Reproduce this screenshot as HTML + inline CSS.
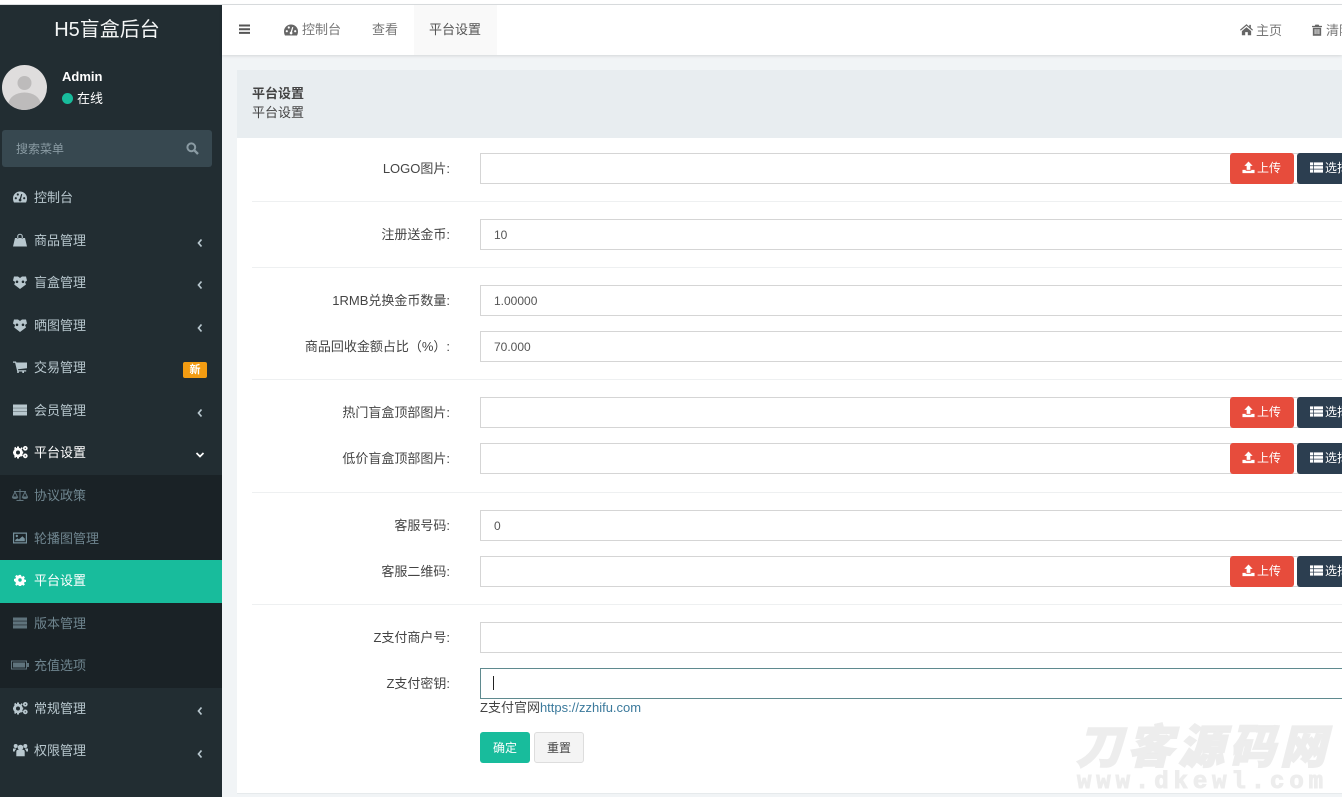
<!DOCTYPE html>
<html lang="zh-CN"><head><meta charset="utf-8"><title>平台设置</title>
<style>
*{box-sizing:border-box}
html,body{margin:0;padding:0;width:1342px;height:797px;overflow:hidden;background:#fff;font-family:"Liberation Sans","Noto Sans CJK SC",sans-serif;font-size:13px;color:#444}
.a{position:absolute;white-space:nowrap}
svg{position:absolute;display:block}
#top{position:absolute;left:0;top:4px;width:1342px;height:1px;background:#dcdfe1}
#side{position:absolute;left:0;top:5px;width:222px;height:792px;background:#222d32}
#main{position:absolute;left:222px;top:5px;width:1120px;height:792px;background:#f1f4f6}
#nav{position:absolute;left:222px;top:5px;width:1120px;height:50px;background:#fff;box-shadow:0 1px 3px rgba(0,0,0,.12)}
.m{position:absolute;left:34px;line-height:18px;font-size:13px;color:#b8c7ce;white-space:nowrap;transform:translateY(1px)}
.sub{color:#6f858f}
.lbl{position:absolute;right:892px;text-align:right;font-size:13px;line-height:18px;color:#444;white-space:nowrap;transform:translateY(1px)}
.in{position:absolute;left:480px;height:31px;background:#fff;border:1px solid #d5d5d5;padding-left:13px;line-height:31px;font-size:12px;color:#555;width:880px}
.hr{position:absolute;left:252px;width:1090px;height:1px;background:#eef0f1}
.up{position:absolute;left:1230px;width:64px;height:31px;background:#e74c3c;border-radius:3px;color:#fff;font-size:12px;line-height:30px;padding-left:27px}
.ch{position:absolute;left:1297px;width:70px;height:31px;background:#2c3e50;border-radius:3px;color:#fff;font-size:12px;line-height:30px;padding-left:28px}
</style></head><body>
<svg width="0" height="0" style="position:absolute">
<defs>
<symbol id="dash" viewBox="0 0 14 14"><path fill-rule="evenodd" d="M7 1.500a7 7 0 0 0-7 7c0 1.600.4 2.800 1 4h12c.6-1.200 1-2.400 1-4a7 7 0 0 0-7-7zM2.800 9.300a1.100 1.100 0 1 1 0-2.200 1.100 1.100 0 0 1 0 2.200zM4.800 5.600a1.100 1.100 0 1 1 0-2.200 1.100 1.100 0 0 1 0 2.200zM9.300 4.300 8 9a1.400 1.400 0 1 1-1.300-.3L8.200 4zM11.200 9.300a1.100 1.100 0 1 1 0-2.200 1.100 1.100 0 0 1 0 2.200z"/></symbol>
<symbol id="bag" viewBox="0 0 14 14"><path fill-rule="evenodd" d="M2 5h10l2 8.500H0zM4.200 5.500V3.500a2.800 2.800 0 0 1 5.600 0v2H8.700v-2a1.700 1.700 0 0 0-3.400 0v2z"/></symbol>
<symbol id="box" viewBox="0 0 14 14"><path fill-rule="evenodd" d="M1 1.500h4L7 3l2-1.500h4l1 4-2 1.500 1 2.500L7 14l-5.800-4.500L2.200 7 0 5.500zM4 5.500a1.300 1.300 0 1 0 0 2.600 1.300 1.300 0 0 0 0-2.600zM10 5.500a1.300 1.300 0 1 0 0 2.600 1.300 1.300 0 0 0 0-2.600z"/></symbol>
<symbol id="cart" viewBox="0 0 14 14"><path d="M0 1.500h3l.4 1H14v5.700l-9 1 .2 1h8v1.300h-2.200v1.500H9.300v-1.500H5.800v1.500H4.200v-1.700L2.100 2.800H0z"/></symbol>
<symbol id="list" viewBox="0 0 14 14"><path d="M0 1.500h14v11H0z"/><path d="M0 4.700h14v.7H0zM0 8.200h14v.7H0z" fill="#222d32" fill-opacity=".55"/></symbol>
<symbol id="listw" viewBox="0 0 14 14"><path d="M0 1.500h14v11H0z"/><path d="M0 4.700h14v.8H0zM0 8.300h14v.8H0zM3.500 1.500h.8v11h-.8z" fill="#2c3e50"/></symbol>
<symbol id="cogs" viewBox="0 0 15 14"><circle cx="5" cy="7.500" r="3.400" fill="none" stroke="currentColor" stroke-width="2.800"/><path d="M4 1.500h2v2H4zM4 11.500h2v2H4zM-.2 6.500h2v2h-2zM8.200 6.500h2v2h-2zM1 3l1.500-1.200 1 1.400-1.400 1.200zM7.500 10.200l1.300-1.100 1.200 1.400-1.400 1.100zM1 12l1.300 1 1.100-1.400-1.300-1zM7.500 3.500l1.300 1 1-1.400-1.300-1z"/><circle cx="12.300" cy="3.300" r="1.500" fill="none" stroke="currentColor" stroke-width="1.700"/><circle cx="12.300" cy="10.900" r="1.500" fill="none" stroke="currentColor" stroke-width="1.700"/></symbol>
<symbol id="scale" viewBox="0 0 16 14"><path d="M7.500 1h1v11h3v1h-7v-1h3z"/><path d="M2 3h12v1H2z"/><path d="M3 4 .5 9h5zM13 4l-2.500 5h5z" fill="none" stroke="currentColor"/><path d="M0 9h6c0 1.500-1.300 2-3 2s-3-.5-3-2zM10 9h6c0 1.500-1.300 2-3 2s-3-.5-3-2z"/></symbol>
<symbol id="pic" viewBox="0 0 14 14"><path fill-rule="evenodd" d="M0 1.500h14v11H0zM1.200 2.700v8.600h11.600V2.700z"/><circle cx="3.800" cy="5" r="1.200"/><path d="M2.200 10.300v-1.300l2.200-1.800 1.500 1.200 3.500-3.200 2.400 2.400v2.700z"/></symbol>
<symbol id="cog" viewBox="0 0 14 14"><path fill-rule="evenodd" d="M5.800 1h2.400l.3 1.700 1.100.5 1.500-1 1.600 1.700-1 1.400.5 1.200 1.800.3v2.400l-1.800.3-.5 1.100 1 1.500-1.600 1.600-1.500-1-1.100.5-.3 1.800H5.800l-.3-1.800-1.100-.5-1.500 1-1.600-1.600 1-1.500-.5-1.100L0 8.100V5.700l1.800-.3.500-1.200-1-1.400L2.900 1.100l1.500 1 1.100-.5zM7 5a2 2 0 1 0 0 4 2 2 0 0 0 0-4z"/></symbol>
<symbol id="server" viewBox="0 0 14 14"><path d="M0 1.500h14v3.200H0zM0 5.400h14v3.200H0zM0 9.300h14v3.200H0z"/></symbol>
<symbol id="batt" viewBox="0 0 18 10"><path fill-rule="evenodd" d="M0 .5h16V3h2v4h-2v2.500H0zM1 1.500v7h14v-7z"/><path d="M2 2.500h12v5H2z"/></symbol>
<symbol id="users" viewBox="0 0 15 14"><circle cx="7.500" cy="4.500" r="2.800"/><circle cx="2.700" cy="3" r="2"/><circle cx="12.300" cy="3" r="2"/><path d="M3.300 8.500c0-1.300 1-1.800 2-1.800h4.400c1 0 2 .5 2 1.800v4.800H3.300zM0 5.500h3v.9c-.8.400-1.200 1.100-1.200 2.100H0zM12 5.500h3v3h-1.800c0-1-.4-1.700-1.200-2.100z"/></symbol>
<symbol id="upload" viewBox="0 0 14 14"><path d="M7 .5l4.500 4.800H9v4.200H5V5.300H2.500zM.5 9.500H4v1h6v-1h3.500v3.500H.5z"/></symbol>
<symbol id="left" viewBox="0 0 6 10"><path d="M4.500 1.500 1.500 5l3 3.500" fill="none" stroke="currentColor" stroke-width="1.700"/></symbol>
<symbol id="home" viewBox="0 0 14 14"><path d="M7 1.200 0 7.300l.8.900L7 3l6.200 5.200.8-.9-2.300-2V2H10v2z"/><path d="M2 8.800 7 4.600l5 4.200v4.400H8.400V9.800H5.600v3.400H2z"/></symbol>
<symbol id="trash" viewBox="0 0 12 14"><path fill-rule="evenodd" d="M4 .5h4l.7 1.500H12v1.500H0V2h3.300zM1 4.300h10V14H1zM3.200 6v6h1V6zM5.500 6v6h1V6zM7.800 6v6h1V6z"/></symbol>
</defs></svg>

<div id="top"></div>
<div id="main"></div>
<div id="side"></div>

<!-- sidebar -->
<div class="a" style="left:0;width:214px;text-align:center;top:15px;font-size:20px;line-height:30px;color:#f4f6f6">H5盲盒后台</div>
<svg style="left:2px;top:65px" width="45" height="45" viewBox="0 0 45 45"><defs><clipPath id="c"><circle cx="22.500" cy="22.500" r="22.500"/></clipPath></defs><circle cx="22.500" cy="22.500" r="22.500" fill="#dfdddd"/><g clip-path="url(#c)" fill="#bdbbbb"><circle cx="22.500" cy="18" r="7"/><ellipse cx="22.500" cy="39" rx="16" ry="11.500"/></g></svg>
<div class="a" style="left:62px;top:68px;font-size:13px;line-height:18px;font-weight:bold;color:#fff">Admin</div>
<div class="a" style="left:62px;top:93px;width:11px;height:11px;border-radius:50%;background:#18bc9c"></div>
<div class="a" style="left:77px;top:90px;font-size:13px;line-height:18px;color:#fff">在线</div>
<div class="a" style="left:2px;top:130px;width:210px;height:37px;background:#374850;border-radius:3px"></div>
<div class="a" style="left:16px;top:140px;font-size:12px;line-height:18px;color:#8a9ba3">搜索菜单</div>
<svg style="left:186px;top:142px;color:#8a9ba3" width="13" height="13" viewBox="0 0 13 13"><circle cx="5.300" cy="5.300" r="3.900" fill="none" stroke="currentColor" stroke-width="2"/><path d="M8.200 8.200 12 12" stroke="currentColor" stroke-width="2.400"/></svg>

<div class="a" style="left:0;top:475px;width:222px;height:213px;background:#1a2226"></div>
<div class="a" style="left:0;top:560px;width:222px;height:43px;background:#18bc9c"></div>

<div class="m" style="top:188px">控制台</div><svg style="left:13px;top:190px;fill:#b8c7ce" width="14" height="14"><use href="#dash"/></svg>
<div class="m" style="top:231px">商品管理</div><svg style="left:13px;top:233px;fill:#b8c7ce" width="14" height="14"><use href="#bag"/></svg>
<div class="m" style="top:273px">盲盒管理</div><svg style="left:13px;top:275px;fill:#b8c7ce" width="14" height="14"><use href="#box"/></svg>
<div class="m" style="top:316px">晒图管理</div><svg style="left:13px;top:318px;fill:#b8c7ce" width="14" height="14"><use href="#box"/></svg>
<div class="m" style="top:358px">交易管理</div><svg style="left:13px;top:360px;fill:#b8c7ce" width="14" height="14"><use href="#cart"/></svg>
<div class="m" style="top:401px">会员管理</div><svg style="left:13px;top:403px;fill:#b8c7ce" width="14" height="14"><use href="#list"/></svg>
<div class="m" style="top:443px;color:#fff">平台设置</div><svg style="left:13px;top:445px;fill:#fff;color:#fff" width="15" height="14"><use href="#cogs"/></svg>
<div class="m sub" style="top:486px">协议政策</div><svg style="left:12px;top:488px;fill:#5f737c;color:#5f737c" width="16" height="14"><use href="#scale"/></svg>
<div class="m sub" style="top:529px">轮播图管理</div><svg style="left:13px;top:531px;fill:#75909b" width="14" height="14"><use href="#pic"/></svg>
<div class="m" style="top:571px;color:#fff">平台设置</div><svg style="left:14px;top:574px;fill:#fff" width="12" height="12" viewBox="0 0 14 14"><use href="#cog"/></svg>
<div class="m sub" style="top:614px">版本管理</div><svg style="left:13px;top:616px;fill:#5f737c" width="14" height="14"><use href="#server"/></svg>
<div class="m sub" style="top:656px">充值选项</div><svg style="left:11px;top:660px;fill:#5f737c" width="18" height="10"><use href="#batt"/></svg>
<div class="m" style="top:699px">常规管理</div><svg style="left:13px;top:701px;fill:#b8c7ce;color:#b8c7ce" width="15" height="14"><use href="#cogs"/></svg>
<div class="m" style="top:741px">权限管理</div><svg style="left:13px;top:743px;fill:#b8c7ce" width="15" height="14"><use href="#users"/></svg>

<svg style="left:197px;top:238px;color:#b8c7ce" width="6" height="10"><use href="#left"/></svg>
<svg style="left:197px;top:280px;color:#b8c7ce" width="6" height="10"><use href="#left"/></svg>
<svg style="left:197px;top:323px;color:#b8c7ce" width="6" height="10"><use href="#left"/></svg>
<svg style="left:197px;top:408px;color:#b8c7ce" width="6" height="10"><use href="#left"/></svg>
<svg style="left:197px;top:706px;color:#b8c7ce" width="6" height="10"><use href="#left"/></svg>
<svg style="left:197px;top:749px;color:#b8c7ce" width="6" height="10"><use href="#left"/></svg>
<svg style="left:195px;top:452px" width="10" height="6" viewBox="0 0 10 6"><path d="M1.500 1 5 4.500 8.500 1" fill="none" stroke="#fff" stroke-width="1.700"/></svg>
<div class="a" style="left:183px;top:362px;width:24px;height:16px;background:#f39c12;border-radius:2px;color:#fff;font-size:11px;font-weight:bold;line-height:16px;text-align:center">新</div>

<!-- navbar -->
<div id="nav"></div>
<div class="a" style="left:414px;top:5px;width:83px;height:50px;background:#f9f9f9"></div>
<svg style="left:239px;top:24px" width="11" height="11" viewBox="0 0 11 11"><path d="M0 .5h11v2H0zM0 4.200h11v2H0zM0 7.900h11v2H0z" fill="#555"/></svg>
<svg style="left:284px;top:23px;fill:#666" width="14" height="14"><use href="#dash"/></svg>
<div class="a" style="left:302px;top:21px;line-height:18px;color:#777">控制台</div>
<div class="a" style="left:372px;top:21px;line-height:18px;color:#777">查看</div>
<div class="a" style="left:429px;top:21px;line-height:18px;color:#555">平台设置</div>
<svg style="left:1240px;top:23px;fill:#666" width="13" height="13" viewBox="0 0 14 14"><use href="#home"/></svg>
<div class="a" style="left:1256px;top:22px;line-height:18px;color:#777">主页</div>
<svg style="left:1312px;top:24px;fill:#666" width="10" height="12" viewBox="0 0 12 14"><use href="#trash"/></svg>
<div class="a" style="left:1326px;top:22px;line-height:18px;color:#777">清除缓存</div>

<!-- panel -->
<div class="a" style="left:237px;top:70px;width:1105px;height:724px;background:#fff;border-bottom:1px solid #e6eaec"></div>
<div class="a" style="left:237px;top:70px;width:1105px;height:68px;background:#e8edf0"></div>
<div class="a" style="left:252px;top:85px;line-height:18px;font-weight:bold;color:#444">平台设置</div>
<div class="a" style="left:252px;top:104px;line-height:18px;color:#444">平台设置</div>

<div class="lbl" style="top:159px">LOGO图片:</div>
<div class="in" style="top:153px"></div>
<div class="up" style="top:153px">上传</div><svg style="left:1242px;top:161px;fill:#fff" width="13" height="13" viewBox="0 0 14 14"><use href="#upload"/></svg>
<div class="ch" style="top:153px">选择</div><svg style="left:1310px;top:161px;fill:#fff" width="13" height="13" viewBox="0 0 14 14"><use href="#listw"/></svg>
<div class="hr" style="top:201px"></div>

<div class="lbl" style="top:225px">注册送金币:</div>
<div class="in" style="top:219px">10</div>
<div class="hr" style="top:267px"></div>

<div class="lbl" style="top:291px">1RMB兑换金币数量:</div>
<div class="in" style="top:285px">1.00000</div>
<div class="lbl" style="top:337px">商品回收金额占比（%）:</div>
<div class="in" style="top:331px">70.000</div>
<div class="hr" style="top:379px"></div>

<div class="lbl" style="top:403px">热门盲盒顶部图片:</div>
<div class="in" style="top:397px"></div>
<div class="up" style="top:397px">上传</div><svg style="left:1242px;top:405px;fill:#fff" width="13" height="13" viewBox="0 0 14 14"><use href="#upload"/></svg>
<div class="ch" style="top:397px">选择</div><svg style="left:1310px;top:405px;fill:#fff" width="13" height="13" viewBox="0 0 14 14"><use href="#listw"/></svg>
<div class="lbl" style="top:449px">低价盲盒顶部图片:</div>
<div class="in" style="top:443px"></div>
<div class="up" style="top:443px">上传</div><svg style="left:1242px;top:451px;fill:#fff" width="13" height="13" viewBox="0 0 14 14"><use href="#upload"/></svg>
<div class="ch" style="top:443px">选择</div><svg style="left:1310px;top:451px;fill:#fff" width="13" height="13" viewBox="0 0 14 14"><use href="#listw"/></svg>
<div class="hr" style="top:492px"></div>

<div class="lbl" style="top:516px">客服号码:</div>
<div class="in" style="top:510px">0</div>
<div class="lbl" style="top:562px">客服二维码:</div>
<div class="in" style="top:556px"></div>
<div class="up" style="top:556px">上传</div><svg style="left:1242px;top:564px;fill:#fff" width="13" height="13" viewBox="0 0 14 14"><use href="#upload"/></svg>
<div class="ch" style="top:556px">选择</div><svg style="left:1310px;top:564px;fill:#fff" width="13" height="13" viewBox="0 0 14 14"><use href="#listw"/></svg>
<div class="hr" style="top:604px"></div>

<div class="lbl" style="top:628px">Z支付商户号:</div>
<div class="in" style="top:622px"></div>
<div class="lbl" style="top:674px">Z支付密钥:</div>
<div class="in" style="top:668px;border-color:#5f8a8f"></div>
<div class="a" style="left:493px;top:676px;width:1px;height:14px;background:#222"></div>
<div class="a" style="left:480px;top:699px;font-size:13px;line-height:18px;color:#444">Z支付官网<span style="color:#3c7a9c">https://zzhifu.com</span></div>
<div class="a" style="left:480px;top:732px;width:50px;height:31px;background:#18bc9c;border-radius:3px;color:#fff;font-size:12px;line-height:32px;text-align:center">确定</div>
<div class="a" style="left:534px;top:732px;width:50px;height:31px;background:#f4f4f4;border:1px solid #ddd;border-radius:3px;color:#444;font-size:12px;line-height:30px;text-align:center">重置</div>

<!-- watermark -->
<div class="a" style="left:1076px;top:722px;font-size:46px;line-height:50px;font-weight:900;font-style:italic;color:#ededed;letter-spacing:5px;-webkit-text-stroke:1.500px #ededed">刀客源码网</div>
<div class="a" style="left:1077px;top:771px;font-family:'Liberation Mono',monospace;font-size:24px;line-height:24px;font-weight:bold;color:#ededed;letter-spacing:4.900px;-webkit-text-stroke:1px #ededed">www.dkewl.com</div>
</body></html>
